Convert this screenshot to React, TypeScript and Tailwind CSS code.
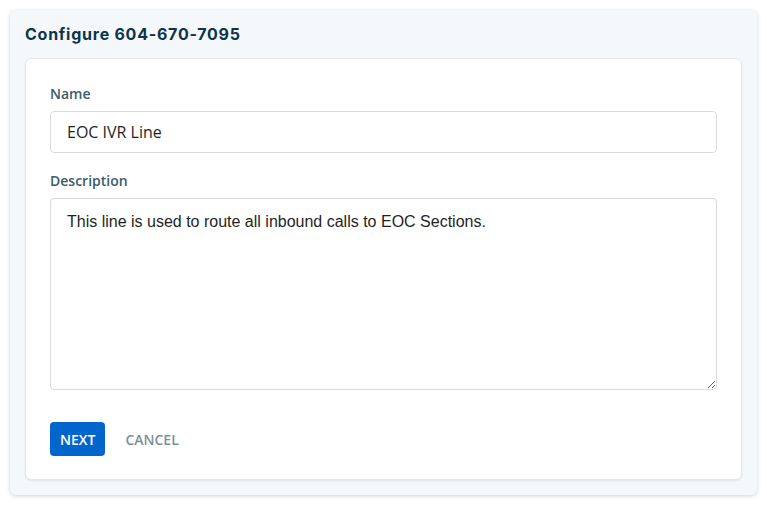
import React from 'react';

export default function App() {
  return (
    <div className="min-h-screen bg-white p-[10px]" style={{ fontFamily: '"Open Sans", sans-serif' }}>
      <div className="w-[747px] rounded-md bg-[#f4f8fb] px-[15px] pb-[15px] shadow-[0_1px_4px_rgba(0,0,0,0.18)]">
        <h1
          className="pt-[11px] pb-[10px] text-[16px] font-bold leading-[27px] tracking-[0.75px] text-[#0d3447]"
          style={{ fontFamily: 'Inter, sans-serif' }}
        >
          Configure 604-670-7095
        </h1>
        <div className="rounded-md border border-[#e3e8ec] bg-white px-[24px] pt-[23px] pb-[23px] shadow-[0_1px_2px_rgba(0,0,0,0.08)]">
          <label className="block text-[14px] font-semibold leading-[24px] text-[#3d5a6a]">Name</label>
          <input
            defaultValue="EOC IVR Line"
            className="mt-[5px] block h-[42px] w-full rounded border border-[#d9dcde] px-[16px] text-[16px] text-[#1f1f1f] outline-none"
          />
          <label className="mt-[16px] block text-[14px] font-semibold leading-[24px] text-[#3d5a6a]">Description</label>
          <textarea
            defaultValue="This line is used to route all inbound calls to EOC Sections."
            className="mt-[5px] block h-[192px] w-full rounded border border-[#d9dcde] px-[16px] py-[11px] text-[16px] leading-[24px] text-[#1f1f1f] outline-none"
            style={{ fontFamily: '"Liberation Sans", Arial, sans-serif' }}
          />
          <div className="mt-[32px] flex items-center gap-[20px]">
            <button className="h-[34px] rounded bg-[#0066cc] px-[10px] text-[14px] font-semibold text-white">NEXT</button>
            <button className="h-[34px] text-[14px] font-semibold text-[#7d8f99]">CANCEL</button>
          </div>
        </div>
      </div>
    </div>
  );
}
